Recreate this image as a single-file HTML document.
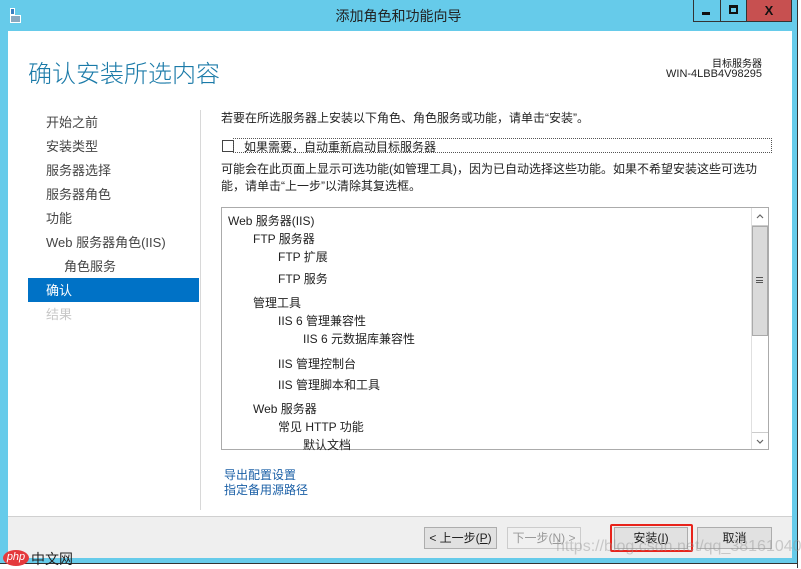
<!DOCTYPE html><html><head><meta charset="utf-8"><style>
*{margin:0;padding:0;box-sizing:border-box}
body{width:801px;height:568px;position:relative;background:#fff;overflow:hidden;font-family:"Liberation Sans","Noto Sans CJK SC",sans-serif;font-size:12px;color:#1e1e1e}
.a{position:absolute;white-space:nowrap}
.nav{color:#444;font-size:13px}
.t{font-size:12px;color:#222}
.btn{position:absolute;top:527px;height:22px;border:1px solid #adadad;background:#e1e1e1;text-align:center;line-height:20px;font-size:12px}
</style></head><body>
<div class="a" style="left:0;top:0;width:797px;height:563px;background:#66cbea"></div>
<div class="a" style="left:797px;top:0;width:1px;height:568px;background:#333"></div>
<div class="a" style="left:0;top:563px;width:797px;height:1px;background:#333"></div>
<!-- title icon -->
<div class="a" style="left:10px;top:8px;width:5px;height:7px;border:1px solid #fff;background:#3a7fc0"></div>
<div class="a" style="left:10px;top:15px;width:11px;height:8px;border:1px solid #fff;background:#8aa9c0"></div>
<div class="a" style="left:0;top:6px;width:797px;text-align:center;font-size:14px;color:#222">添加角色和功能向导</div>
<div class="a" style="left:693px;top:0;width:54px;height:22px;border:1px solid #333;border-top:none"></div>
<div class="a" style="left:720px;top:0;width:1px;height:22px;background:#333"></div>
<div class="a" style="left:746px;top:0;width:46px;height:22px;background:#c75050;border:1px solid #333;border-top:none;color:#111;font-weight:bold;text-align:center;font-size:13px;line-height:21px">X</div>
<div class="a" style="left:702px;top:12px;width:8px;height:3px;background:#111"></div>
<div class="a" style="left:729px;top:5px;width:9px;height:9px;border:2px solid #111;border-top-width:3px"></div>
<!-- content -->
<div class="a" style="left:8px;top:31px;width:784px;height:485px;background:#fff"></div>
<div class="a" style="left:8px;top:516px;width:784px;height:1px;background:#d0d0d0"></div>
<div class="a" style="left:8px;top:517px;width:784px;height:41px;background:#efefef"></div>
<div class="a" style="left:28px;top:54px;font-size:24px;color:#1a7aa8;font-weight:300">确认安装所选内容</div>
<div class="a" style="left:632px;top:55px;width:130px;text-align:right;font-size:10px;color:#111">目标服务器</div>
<div class="a" style="left:632px;top:68px;width:130px;text-align:right;font-size:11px;color:#222">WIN-4LBB4V98295</div>
<div class="a nav" style="left:46px;top:112px">开始之前</div>
<div class="a nav" style="left:46px;top:136px">安装类型</div>
<div class="a nav" style="left:46px;top:160px">服务器选择</div>
<div class="a nav" style="left:46px;top:184px">服务器角色</div>
<div class="a nav" style="left:46px;top:208px">功能</div>
<div class="a nav" style="left:46px;top:232px">Web 服务器角色(IIS)</div>
<div class="a nav" style="left:64px;top:256px">角色服务</div>
<div class="a" style="left:28px;top:278px;width:171px;height:24px;background:#0072c6"></div>
<div class="a nav" style="left:46px;top:280px;color:#fff">确认</div>
<div class="a nav" style="left:46px;top:304px;color:#c8c8c8">结果</div>
<div class="a" style="left:200px;top:110px;width:1px;height:400px;background:#d8d8d8"></div>
<div class="a t" style="left:221px;top:109px">若要在所选服务器上安装以下角色、角色服务或功能，请单击“安装”。</div>
<div class="a" style="left:222px;top:140px;width:12px;height:12px;border:1px solid #444;background:#fff"></div>
<div class="a" style="left:233px;top:138px;width:539px;height:15px;border:1px dotted #555"></div>
<div class="a t" style="left:244px;top:138px">如果需要，自动重新启动目标服务器</div>
<div class="a t" style="left:221px;top:160px">可能会在此页面上显示可选功能(如管理工具)，因为已自动选择这些功能。如果不希望安装这些可选功</div>
<div class="a t" style="left:221px;top:177px">能，请单击“上一步”以清除其复选框。</div>
<div class="a" style="left:221px;top:207px;width:548px;height:243px;border:1px solid #ababab;background:#fff"></div>
<div class="a" style="left:751px;top:208px;width:17px;height:241px;border-left:1px solid #e0e0e0"></div>
<div class="a" style="left:752px;top:225px;width:16px;height:1px;background:#ccc"></div>
<div class="a" style="left:752px;top:432px;width:16px;height:1px;background:#ccc"></div>
<div class="a" style="left:752px;top:226px;width:16px;height:110px;background:#dadada;border:1px solid #aaa"></div>
<div class="a" style="left:756px;top:277px;width:7px;height:6px;border-top:1px solid #555;border-bottom:1px solid #555"></div>
<div class="a" style="left:756px;top:280px;width:7px;height:1px;background:#555"></div>
<svg class="a" style="left:752px;top:208px" width="16" height="17"><path d="M5 10 L8 7 L11 10" fill="none" stroke="#666" stroke-width="1.2"/></svg>
<svg class="a" style="left:752px;top:433px" width="16" height="16"><path d="M5 7 L8 10 L11 7" fill="none" stroke="#666" stroke-width="1.2"/></svg>
<div class="a t" style="left:228px;top:212px">Web 服务器(IIS)</div>
<div class="a t" style="left:253px;top:230px">FTP 服务器</div>
<div class="a t" style="left:278px;top:248px">FTP 扩展</div>
<div class="a t" style="left:278px;top:270px">FTP 服务</div>
<div class="a t" style="left:253px;top:294px">管理工具</div>
<div class="a t" style="left:278px;top:312px">IIS 6 管理兼容性</div>
<div class="a t" style="left:303px;top:330px">IIS 6 元数据库兼容性</div>
<div class="a t" style="left:278px;top:355px">IIS 管理控制台</div>
<div class="a t" style="left:278px;top:376px">IIS 管理脚本和工具</div>
<div class="a t" style="left:253px;top:400px">Web 服务器</div>
<div class="a t" style="left:278px;top:418px">常见 HTTP 功能</div>
<div class="a t" style="left:303px;top:436px">默认文档</div>
<div class="a t" style="left:224px;top:466px;color:#1a5fa6">导出配置设置</div>
<div class="a t" style="left:224px;top:481px;color:#1a5fa6">指定备用源路径</div>
<div class="btn" style="left:424px;width:73px">&lt; 上一步(<u>P</u>)</div>
<div class="btn" style="left:507px;width:74px;color:#999;border-color:#ccc;background:#f0f0f0">下一步(<u>N</u>) &gt;</div>
<div class="btn" style="left:614px;width:74px">安装(<u>I</u>)</div>
<div class="a" style="left:610px;top:524px;width:83px;height:28px;border:2px solid #e8231b;border-radius:2px"></div>
<div class="btn" style="left:697px;width:75px">取消</div>
<div class="a" style="left:556px;top:538px;font-size:16px;color:rgba(150,150,150,0.45)">https://blog.csdn.net/qq_38161040</div>
<div class="a" style="left:3px;top:550px;width:26px;height:16px;background:#e4393c;border-radius:50%;color:#fff;font-size:11px;text-align:center;line-height:15px;font-style:italic">php</div>
<div class="a" style="left:31px;top:549px;font-size:14px;color:#222">中文网</div>
</body></html>
